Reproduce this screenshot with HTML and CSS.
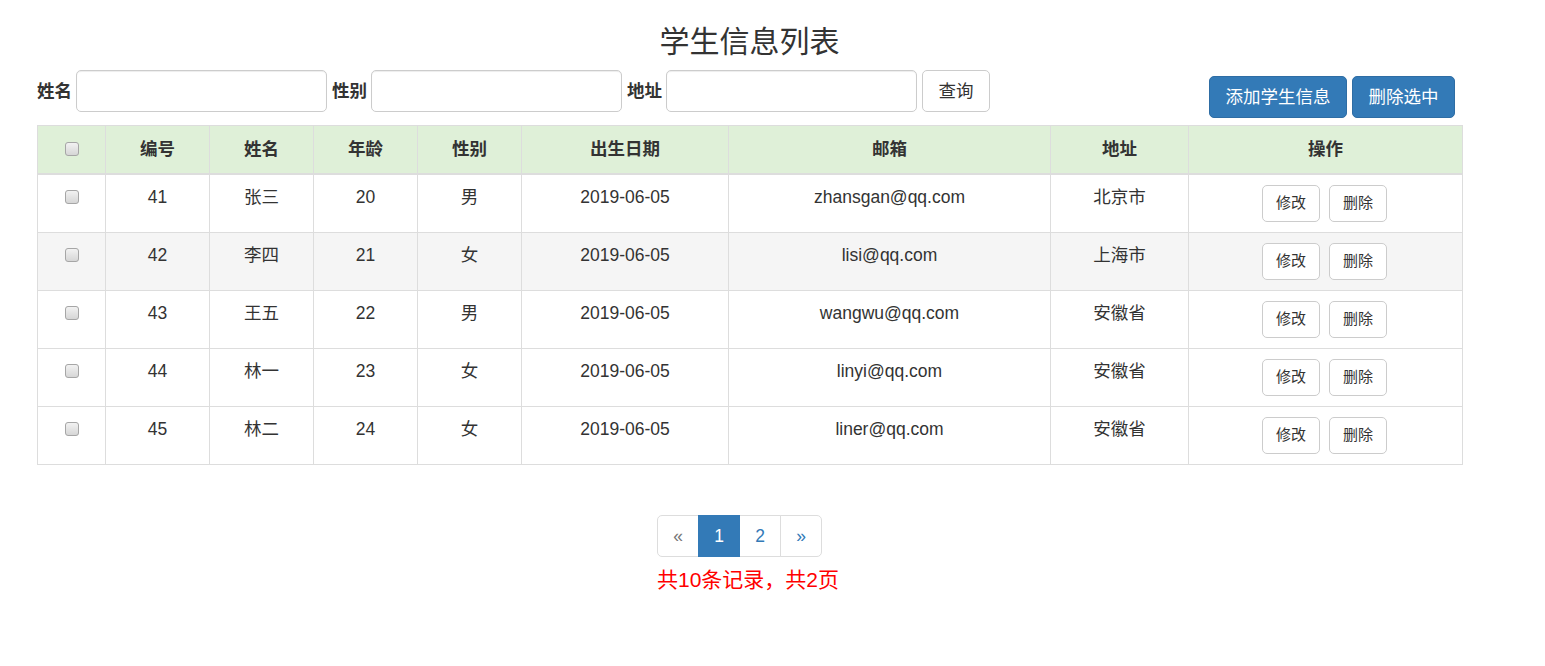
FILE: index.html
```html
<!DOCTYPE html>
<html lang="zh-CN">
<head>
<meta charset="utf-8">
<title>学生信息列表</title>
<link rel="stylesheet" href="styles.css">
</head>
<body>
<div class="container">
  <h3 class="title">学生信息列表</h3>
  <div class="toolbar">
    <form class="search">
      <label class="lbl">姓名</label><input class="input" type="text">
      <label class="lbl">性别</label><input class="input" type="text">
      <label class="lbl">地址</label><input class="input" type="text">
      <button type="button" class="btn btn-default">查询</button>
    </form>
    <div class="actions">
      <button type="button" class="btn btn-primary">添加学生信息</button>
      <button type="button" class="btn btn-primary">删除选中</button>
    </div>
  </div>
  <table class="grid">
    <colgroup>
      <col class="c0"><col class="c1"><col class="c1"><col class="c1"><col class="c1"><col class="c5"><col class="c6"><col class="c7"><col class="c8">
    </colgroup>
    <thead>
      <tr class="head"><th><span class="cb"></span></th><th>编号</th><th>姓名</th><th>年龄</th><th>性别</th><th>出生日期</th><th>邮箱</th><th>地址</th><th>操作</th></tr>
    </thead>
    <tbody>
      <tr><td><span class="cb"></span></td><td>41</td><td>张三</td><td>20</td><td>男</td><td>2019-06-05</td><td>zhansgan@qq.com</td><td>北京市</td><td><button type="button" class="btn btn-sm">修改</button><button type="button" class="btn btn-sm">删除</button></td></tr>
      <tr class="hover"><td><span class="cb"></span></td><td>42</td><td>李四</td><td>21</td><td>女</td><td>2019-06-05</td><td>lisi@qq.com</td><td>上海市</td><td><button type="button" class="btn btn-sm">修改</button><button type="button" class="btn btn-sm">删除</button></td></tr>
      <tr><td><span class="cb"></span></td><td>43</td><td>王五</td><td>22</td><td>男</td><td>2019-06-05</td><td>wangwu@qq.com</td><td>安徽省</td><td><button type="button" class="btn btn-sm">修改</button><button type="button" class="btn btn-sm">删除</button></td></tr>
      <tr><td><span class="cb"></span></td><td>44</td><td>林一</td><td>23</td><td>女</td><td>2019-06-05</td><td>linyi@qq.com</td><td>安徽省</td><td><button type="button" class="btn btn-sm">修改</button><button type="button" class="btn btn-sm">删除</button></td></tr>
      <tr><td><span class="cb"></span></td><td>45</td><td>林二</td><td>24</td><td>女</td><td>2019-06-05</td><td>liner@qq.com</td><td>安徽省</td><td><button type="button" class="btn btn-sm">修改</button><button type="button" class="btn btn-sm">删除</button></td></tr>
    </tbody>
  </table>
  <div class="pager-wrap">
    <ul class="pagination">
      <li class="disabled"><a>&laquo;</a></li>
      <li class="active"><a>1</a></li>
      <li><a>2</a></li>
      <li><a>&raquo;</a></li>
    </ul>
    <div class="summary">共10条记录，共2页</div>
  </div>
</div>
</body>
</html>
```
FILE: styles.css
```css
* { box-sizing: border-box; }
html, body { margin: 0; padding: 0; background: #fff; }
body {
  font-family: "Liberation Sans", Arial, "Noto Sans CJK SC", sans-serif;
  font-size: 17.5px;
  line-height: 25px;
  color: #333;
}
.container { width: 1425px; margin-left: 37px; }
.title {
  margin: 25px 0 12px;
  font-size: 30px;
  line-height: 33px;
  font-weight: normal;
  text-align: center;
}
.toolbar { display: flex; justify-content: space-between; align-items: flex-start; }
.search { display: flex; align-items: center; margin: 0; }
.lbl { font-weight: bold; margin-right: 4px; }
.input {
  width: 250.5px;
  height: 42px;
  margin-right: 5.5px;
  padding: 7.5px 15px;
  border: 1px solid #ccc;
  border-radius: 5px;
  box-shadow: inset 0 1px 1px rgba(0,0,0,.075);
  font: inherit;
  color: #555;
}
.btn {
  display: inline-block;
  height: 42px;
  padding: 7.5px 15px;
  font-family: inherit;
  font-size: 17.5px;
  line-height: 25px;
  border: 1px solid #ccc;
  border-radius: 5px;
  background: #fff;
  color: #333;
  cursor: pointer;
}
.btn-default { width: 68px; padding: 0; }
.actions { display: flex; gap: 5px; margin-top: 6px; margin-right: 7px; }
.btn-primary { background: #337ab7; border-color: #2e6da4; color: #fff; padding: 7.5px 15.5px; }
.grid {
  width: 1425px;
  margin-top: 7px;
  border-collapse: collapse;
  table-layout: fixed;
  border: 1px solid #ddd;
}
.c0 { width: 68px; }
.c1 { width: 104px; }
.c5 { width: 207px; }
.c6 { width: 322px; }
.c7 { width: 138px; }
.c8 { width: 274px; }
.grid th, .grid td {
  border: 1px solid #ddd;
  padding: 10px;
  text-align: center;
  vertical-align: top;
  line-height: 25px;
}
.grid th { font-weight: bold; border-bottom-width: 2.5px; padding: 11px 10px 10.5px; }
.head { background: #dff0d8; }
.hover { background: #f5f5f5; }
.cb {
  display: inline-block;
  width: 14px;
  height: 14px;
  vertical-align: -1px;
  border: 1px solid #a6a6a6;
  border-radius: 3px;
  background: linear-gradient(#f2f2f2, #d6d6d6);
}
.btn-sm {
  height: 37px;
  padding: 5px 13px;
  font-size: 15px;
  line-height: 24px;
  margin: 0 4.5px;
  vertical-align: top;
}
.grid td:last-child { padding-left: 9px; padding-right: 11px; }
.pager-wrap { margin-left: 620px; margin-top: 50px; }
.pagination { display: flex; list-style: none; margin: 0; padding: 0; }
.pagination li a {
  display: block;
  width: 42px;
  height: 42px;
  margin-left: -1px;
  border: 1px solid #ddd;
  color: #337ab7;
  text-align: center;
  line-height: 40px;
  background: #fff;
}
.pagination li.disabled a { color: #777; }
.pagination li:first-child a { margin-left: 0; border-radius: 5px 0 0 5px; }
.pagination li:last-child a { border-radius: 0 5px 5px 0; }
.pagination li.active a { background: #337ab7; border-color: #337ab7; color: #fff; position: relative; }
.summary { margin-top: 8px; font-size: 21px; line-height: 30px; color: #f00; }
```
